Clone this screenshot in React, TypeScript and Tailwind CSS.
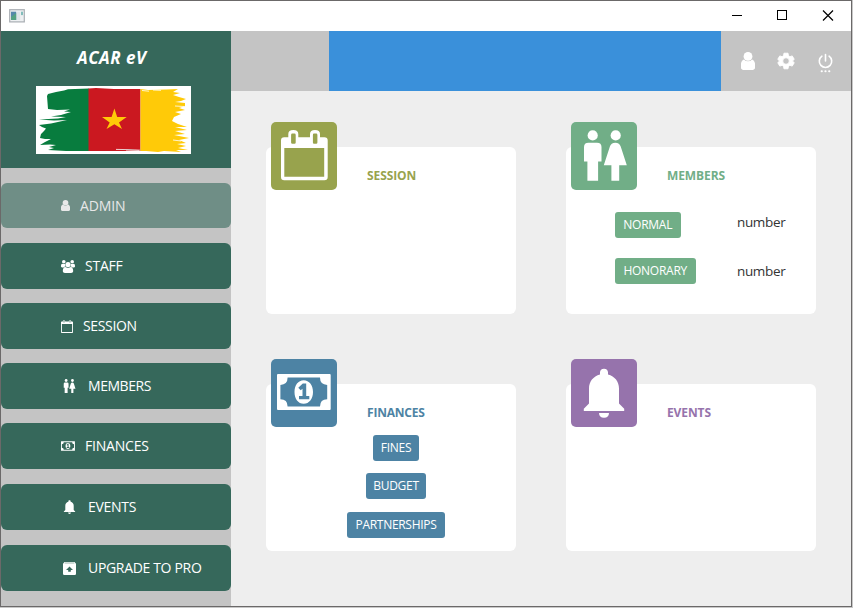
import React from "react";

type IconProps = { className?: string };

const User = ({ className }: IconProps) => (
  <svg viewBox="0 0 14 18" className={className} fill="currentColor" preserveAspectRatio="none">
    <circle cx="7" cy="4.4" r="4.4" />
    <path d="M3 7.4A5.2 5.2 0 0 0 11 7.4C13.4 8.2 14.3 11 14.3 14.5C14.3 16.8 13 18 11 18H3C1 18 -.3 16.8 -.3 14.5C-.3 11 .6 8.2 3 7.4Z" />
  </svg>
);

const Group = ({ className }: IconProps) => (
  <svg viewBox="0 0 14 13" className={className} fill="currentColor">
    <circle cx="2.8" cy="1.8" r="1.8" />
    <circle cx="11.2" cy="1.8" r="1.8" />
    <path d="M0 6.2C0 4.4.6 3.7 1.3 3.7C2.2 4.2 3.2 4.2 4.1 3.9C3.9 5 4.1 5.8 4.7 6.6C3.8 6.6 3 7 2.6 7.4H1.2C.4 7.4 0 7 0 6.2ZM14 6.2C14 4.4 13.4 3.7 12.7 3.7C11.8 4.2 10.8 4.2 9.9 3.9C10.1 5 9.9 5.8 9.3 6.6C10.2 6.6 11 7 11.4 7.4H12.8C13.6 7.4 14 7 14 6.2Z" />
    <circle cx="7" cy="4.6" r="2.6" />
    <path d="M4.3 7.1C6 8.2 8 8.2 9.7 7.1C11.4 7.2 12.2 9 12.2 11C12.2 12.3 11.3 13 10.1 13H3.9C2.7 13 1.8 12.3 1.8 11C1.8 9 2.6 7.2 4.3 7.1Z" />
  </svg>
);

const CalendarSmall = ({ className }: IconProps) => (
  <svg viewBox="0 0 12 13" className={className} fill="currentColor">
    <path fillRule="evenodd" d="M0 2.3Q0 1.6.8 1.6H1.8V1Q2.8-.6 4.2 1V1.6H7.8V1Q9.2-.6 10.2 1V1.6H11.2Q12 1.6 12 2.3V12.3Q12 13 11.2 13H.8Q0 13 0 12.3ZM.9 4.1V12.1H11.1V4.1ZM2.6 1V2.6H3.4V1ZM8.6 1V2.6H9.4V1Z" />
  </svg>
);

const CalendarLarge = ({ className }: IconProps) => (
  <svg viewBox="0 0 66 68" className={className} fill="currentColor">
    <path
      fillRule="evenodd"
      d="M10 18.5Q10 15.3 13.2 15.3H17.3V12Q17.3 8 22.3 8Q27.3 8 27.3 12V15.3H39V12Q39 8 44 8Q49 8 49 12V15.3H53.4Q56.7 15.3 56.7 18.5V55Q56.7 58.3 53.4 58.3H13.2Q10 58.3 10 55ZM13.3 26V54.7H53.2V26ZM20.1 13V20.5Q20.1 21.7 21.3 21.7H23.6Q24.7 21.7 24.7 20.5V13Q24.7 11.6 23.5 11.6H21.3Q20.1 11.6 20.1 13ZM41.9 13V20.5Q41.9 21.7 43 21.7H45.2Q46.4 21.7 46.4 20.5V13Q46.4 11.6 45.2 11.6H43Q41.9 11.6 41.9 13Z"
    />
  </svg>
);

const People = ({ className, viewBox = "0 0 66 68" }: IconProps & { viewBox?: string }) => (
  <svg viewBox={viewBox} className={className} fill="currentColor">
    <circle cx="21.7" cy="13.4" r="5.1" />
    <path d="M17.5 20.7H26Q30.5 20.7 30.5 25V39.5H27.1V58.7H16.4V39.5H13V25Q13 20.7 17.5 20.7Z" />
    <circle cx="44.7" cy="13.4" r="5.1" />
    <path d="M44.3 20.7Q48.6 20.7 49.7 24.5L55.8 43.2H48.2V58.7H40.4V43.2H32.8L38.9 24.5Q40 20.7 44.3 20.7Z" />
  </svg>
);

const Banknote = ({ className, viewBox = "0 0 66 68" }: IconProps & { viewBox?: string }) => (
  <svg viewBox={viewBox} className={className} fill="currentColor">
    <path fillRule="evenodd" d="M7 15H58.7Q59.7 15 59.7 16V50Q59.7 51 58.7 51H7Q6 51 6 50V16Q6 15 7 15ZM16.6 18.6Q16.6 25.9 9.4 25.9V40.2Q16.6 40.2 16.6 47.5H49Q49 40.2 56.2 40.2V25.9Q49 25.9 49 18.6Z" />
    <path fillRule="evenodd" d="M32.7 21.3C38.2 21.3 42 26.3 42 33S38.2 44.8 32.7 44.8S23.5 39.7 23.5 33S27.2 21.3 32.7 21.3ZM31.8 24.6L27.3 28.7L29.7 31.3L31.5 29.7V37.1H28V40.3H38.3V37.1H35.2V24.6Z" />
  </svg>
);

const Bell = ({ className, viewBox = "0 0 66 68" }: IconProps & { viewBox?: string }) => (
  <svg viewBox={viewBox} className={className} fill="currentColor">
    <path d="M33 9.8C35.5 9.8 37 11.3 37 13.5V15.4C43.8 17.2 48 22.5 48 29.5V44.4L53.2 49.8V52H12.8V49.8L18 44.4V29.5C18 22.5 22.2 17.2 29 15.4V13.5C29 11.3 30.5 9.8 33 9.8Z" />
    <path d="M28 54H38C38 57 36.2 58.8 33 58.8S28 57 28 54Z" />
  </svg>
);

const Unarchive = ({ className }: IconProps) => (
  <svg viewBox="0 0 13 13" className={className} fill="currentColor">
    <path fillRule="evenodd" d="M1.5 0H11.5L13 1.8V11.8Q13 13 11.8 13H1.2Q0 13 0 11.8V1.8ZM1.5 1.3H11.5L11 .8H2ZM6.5 4.6L3 8.1H5.2V9.8H7.8V8.1H10Z" />
  </svg>
);

const Gear = ({ className }: IconProps) => (
  <svg viewBox="0 0 24 24" className={className} fill="currentColor">
    <path
      stroke="currentColor"
      strokeWidth="1.2"
      strokeLinejoin="round"
      fillRule="evenodd"
      d="M9.3 1.6H14.7L15.3 5.1L17.3 6.2L20.3 5.2L23 9.8L20.6 11.9V12.1L23 14.2L20.3 18.8L17.3 17.8L15.3 18.9L14.7 22.4H9.3L8.7 18.9L6.7 17.8L3.7 18.8L1 14.2L3.4 12.1V11.9L1 9.8L3.7 5.2L6.7 6.2L8.7 5.1ZM12 7.6A4.4 4.4 0 1 0 12 16.4A4.4 4.4 0 1 0 12 7.6Z"
    />
  </svg>
);

const Power = ({ className }: IconProps) => (
  <svg viewBox="0 0 15 20" className={className} fill="none" stroke="currentColor" strokeWidth="1.6" strokeLinecap="round">
    <path d="M7.5 1.6V8M3.9 3.2A6.2 6.2 0 1 0 11.1 3.2" />
    <path d="M3.6 18.3H3.9M7.35 18.3H7.65M11.1 18.3H11.4" strokeWidth="1.9" />
  </svg>
);

const WindowGlyph = () => (
  <svg viewBox="0 0 16 14" className="h-[14px] w-4">
    <rect x=".7" y=".7" width="14.6" height="12.2" fill="#eef0f2" stroke="#a9aeb3" strokeWidth="1.2" />
    <rect x="2" y="2.7" width="5.2" height="8.3" fill="#5688aa" />
    <path d="M2 8L7.2 4V11H2Z" fill="#55a182" />
    <rect x="8" y="2.7" width="3.2" height="8.3" fill="#dfe4e7" />
    <rect x="12" y="2.7" width="2" height="3.4" fill="#82bdbb" />
  </svg>
);

const Flag = () => (
  <svg viewBox="0 0 155 68" className="h-[68px] w-[155px] bg-white">
    <path
      fill="#087c3e"
      d="M53 2.5L32 3.2L28 4.5L20 6L12 8L11 10L12 23L21 24L34 23.5L28 25.5L35 26L25 29L15 30.5L30 31L22 32.5L3 33.6L18 34.5L31 34L15 37.5L3 39L6 41L10 42.5L8 45L5 48L4 52L9 53L15 53L9 56L4 59L14 58.5L20 59L13 61L18 62L12 64L30 65H53Z"
    />
    <path fill="#cb1820" d="M52.5 2.5L60 2L78 3H104.5V65H52.5Z" />
    <path
      fill="#ffca08"
      d="M104.5 3L112 4L130 3.5L142 3L137 6L144 7L137 9L143 11L150 13L145 15L139 16L149 17L149 20L143 22L149 24L139 26L145 28L138 31L136 35L142 38L151 41L139 41L151 44L139 45L149 48L138 49L153 52L143 54L150 57L141 58L150 60L142 62L152 64L140 64L145 66L128 65L122 66L110 65H104.5Z"
    />
    <path fill="#ffca08" d="M78.4 22.5L81.2 31H90.7L83 36.4L86 43L78.4 38.3L70.5 43L73.7 36.4L66 31H75.6Z" />
    <path stroke="white" strokeWidth=".8" d="M80 63.4L92 63.6L104 64.2M90 65L103 64.8M106 4.5L113 5.2M117 4L125 4.3M139 20L148 20.5M137 54L145 55" />
  </svg>
);

type NavItem = {
  label: string;
  icon: React.ReactNode;
  box: string;
  text: string;
};

const nav: NavItem[] = [
  { label: "ADMIN", icon: <User className="h-[11px] w-[9px]" />, box: "mt-[15px] h-[45px] bg-[#6f8e86] pl-[60px] text-[#e8e8e8]", text: "ml-[10px] tracking-[-0.15px]" },
  { label: "STAFF", icon: <Group className="h-[13px] w-[14px]" />, box: "mt-[15px] h-[46px] bg-[#36685b] pl-[60px] text-white", text: "ml-[10px] tracking-[-0.25px]" },
  { label: "SESSION", icon: <CalendarSmall className="h-[13px] w-[12px]" />, box: "mt-[14px] h-[46px] bg-[#36685b] pl-[60px] text-white", text: "ml-[10px] tracking-[-0.35px]" },
  { label: "MEMBERS", icon: <People viewBox="11 8 46 51" className="h-[14px] w-[13px]" />, box: "mt-[14px] h-[46px] bg-[#36685b] pl-[62px] text-white", text: "ml-[12px] tracking-[-0.45px]" },
  { label: "FINANCES", icon: <Banknote viewBox="6 15 54 36" className="h-[10px] w-[14px]" />, box: "mt-[14px] h-[46px] bg-[#36685b] pl-[60px] text-white", text: "ml-[10px] tracking-[-0.2px]" },
  { label: "EVENTS", icon: <Bell viewBox="12 9 42 50" className="h-[14px] w-[13px]" />, box: "mt-[15px] h-[46px] bg-[#36685b] pl-[62px] text-white", text: "ml-[12px] tracking-[-0.3px]" },
  { label: "UPGRADE TO PRO", icon: <Unarchive className="h-[13px] w-[13px]" />, box: "mt-[15px] h-[46px] bg-[#36685b] pl-[62px] text-white", text: "ml-[12px] tracking-[-0.33px]" },
];

const Card = ({ title, tile, color, icon, children }: { title: string; tile: string; color: string; icon: React.ReactNode; children?: React.ReactNode }) => (
  <section className="relative h-[167px] w-[250px] rounded-[6px] bg-white">
    <div className={"absolute -top-[25px] left-[5px] h-[68px] w-[66px] rounded-[5px] text-white " + tile}>{icon}</div>
    <h2 className={"pt-[20px] pl-[101px] text-[12px] leading-[18px] font-bold " + color}>{title}</h2>
    {children}
  </section>
);

const Pill = ({ label, look }: { label: string; look: string }) => (
  <button className={"flex h-[26px] shrink-0 items-center justify-center rounded-[3px] pb-px text-[12px] whitespace-nowrap text-white " + look}>{label}</button>
);

export default function App() {
  return (
    <div className="h-[608px] w-[853px] overflow-hidden bg-[#c8c8c8] pr-px pb-px font-['Open_Sans','Noto_Sans',sans-serif]">
      <div className="flex h-[607px] w-[852px] flex-col border border-[#6b6969] bg-[#eeeeee]">
        <header className="flex h-[30px] shrink-0 items-center bg-white pl-2">
          <div className="-mt-px"><WindowGlyph /></div>
          <svg viewBox="0 0 104 12" className="mt-[-2px] mr-[15px] ml-auto h-3 w-[104px]" fill="none" stroke="black" shapeRendering="crispEdges">
            <path d="M0 6.5H10M45.5 1.5H54.5V10.5H45.5Z" />
            <path d="M91 1.5L101 11.5M101 1.5L91 11.5" shapeRendering="auto" strokeWidth="1.2" />
          </svg>
        </header>
        <div className="flex min-h-0 flex-1">
          <aside className="w-[230px] shrink-0 bg-[#c4c4c4]">
            <div className="flex h-[137px] flex-col bg-[#36685b]">
              <h1 className="mt-[15px] pl-[76px] text-[17px] leading-6 font-bold tracking-[0.5px] text-white italic">ACAR eV</h1>
              <div className="mt-4 pl-[35px]"><Flag /></div>
            </div>
            <nav>
              {nav.map((n) => (
                <a key={n.label} className={"flex items-center rounded-[6px] text-[14px] leading-5 whitespace-nowrap " + n.box}>
                  {n.icon}
                  <span className={n.text}>{n.label}</span>
                </a>
              ))}
            </nav>
          </aside>
          <main className="flex-1">
            <div className="flex h-[60px] bg-[#c4c4c4] text-white">
              <div className="ml-[98px] w-[392px] bg-[#3a90da]" />
              <div className="flex flex-1 items-center pl-5">
                <User className="h-[18px] w-[14px]" />
                <Gear className="ml-[22px] h-[18px] w-[18px]" />
                <Power className="mt-[3px] ml-[23px] h-5 w-[15px]" />
              </div>
            </div>
            <div className="grid grid-cols-[250px_250px] gap-x-[50px] gap-y-[70px] pt-14 pl-[35px]">
              <Card title="SESSION" tile="bg-[#98a34d]" color="text-[#98a34d] tracking-[-0.1px]" icon={<CalendarLarge className="h-full w-full" />} />
              <Card title="MEMBERS" tile="bg-[#71ae87]" color="text-[#71ae87] tracking-[-0.1px]" icon={<People className="h-full w-full" />}>
                <div className="mt-[27px] flex pl-[49px]">
                  <div className="flex w-[122px] flex-col gap-5">
                    <Pill label="NORMAL" look="w-[65.5px] bg-[#71ae87] tracking-[-0.25px]" />
                    <Pill label="HONORARY" look="w-[80.5px] bg-[#71ae87] tracking-[-0.25px]" />
                  </div>
                  <div className="flex flex-col gap-[29px] text-[13.5px] leading-5 tracking-[-0.35px] text-[#333]">
                    <span>number</span>
                    <span>number</span>
                  </div>
                </div>
              </Card>
              <Card title="FINANCES" tile="bg-[#4d83a4]" color="text-[#4d83a4] tracking-[-0.2px]" icon={<Banknote className="h-full w-full" />}>
                <div className="mt-[13px] flex flex-col items-center pr-[-10px] pl-[10px]">
                  <Pill label="FINES" look="w-[46.5px] bg-[#4d83a4] tracking-[-0.25px]" />
                  <Pill label="BUDGET" look="mt-3 w-[60px] bg-[#4d83a4] tracking-[-0.25px]" />
                  <Pill label="PARTNERSHIPS" look="mt-[13px] w-[97.5px] bg-[#4d83a4] tracking-[-0.3px]" />
                </div>
              </Card>
              <Card title="EVENTS" tile="bg-[#9673ac]" color="text-[#9673ac] tracking-[-0.1px]" icon={<Bell className="h-full w-full" />} />
            </div>
          </main>
        </div>
      </div>
    </div>
  );
}
